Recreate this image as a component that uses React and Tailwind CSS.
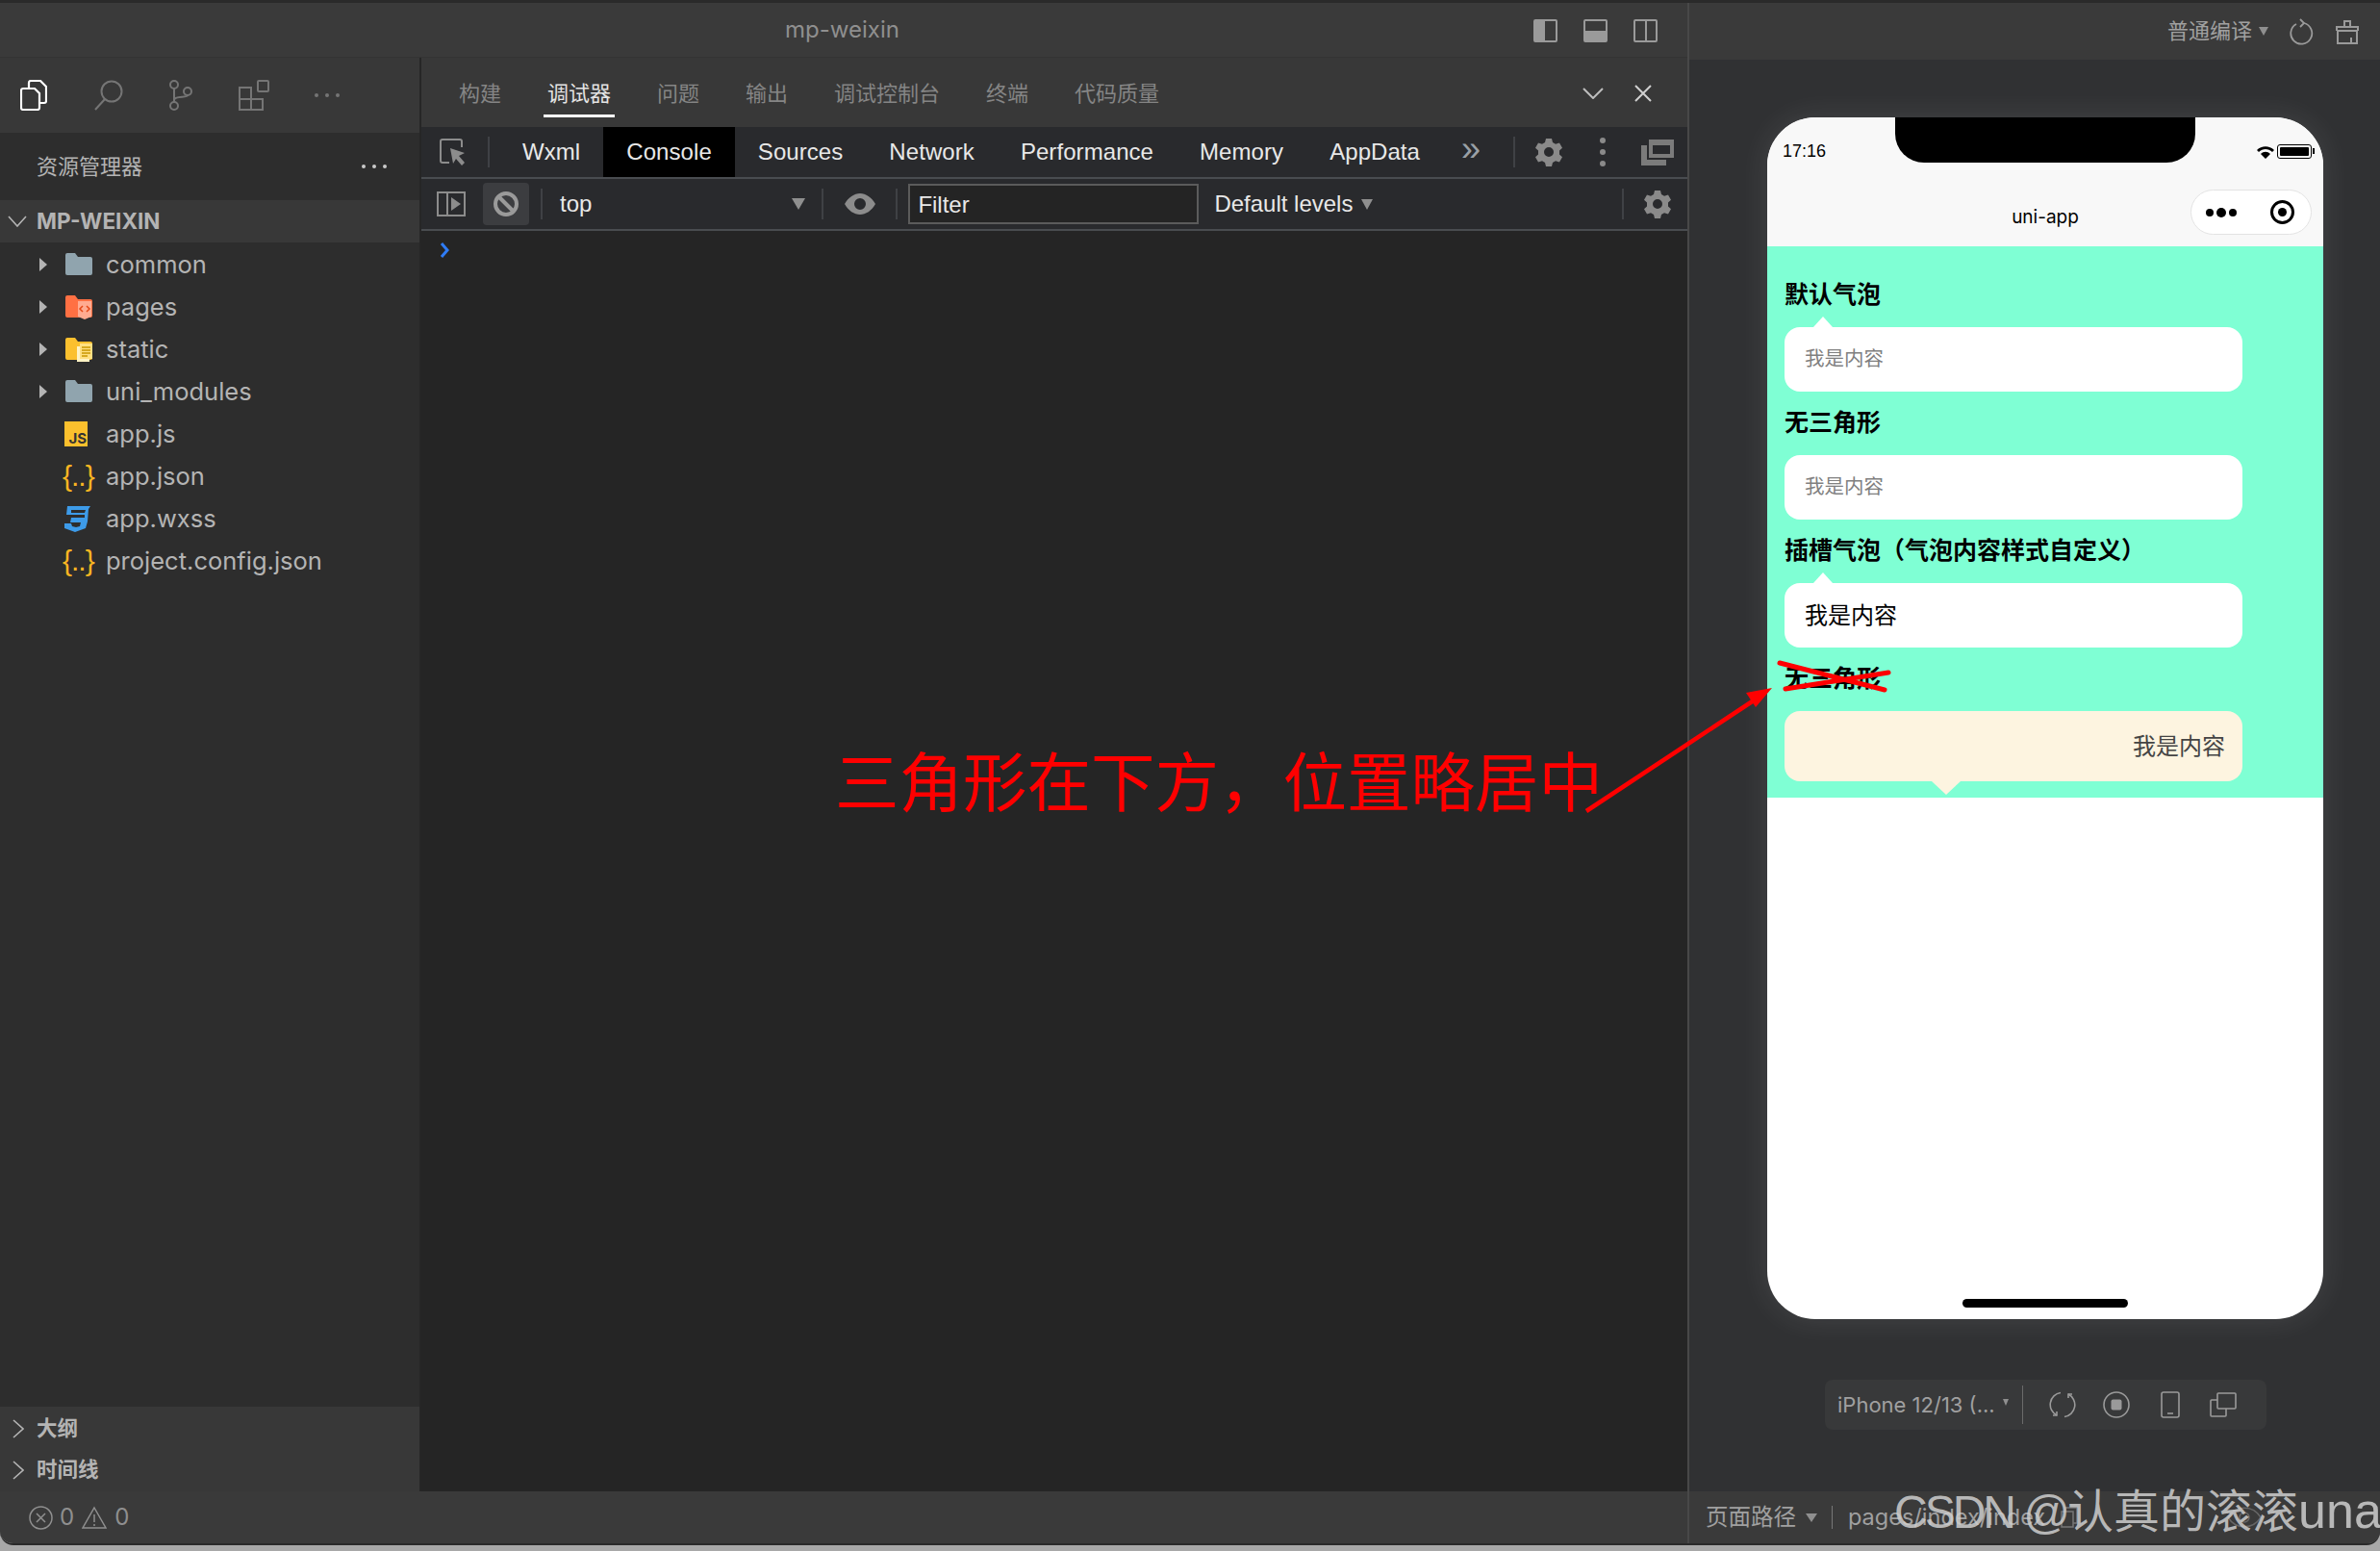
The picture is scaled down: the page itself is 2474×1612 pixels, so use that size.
import React from "react";

const files = [
  { name: "common", type: "folder" },
  { name: "pages", type: "pages" },
  { name: "static", type: "static" },
  { name: "uni_modules", type: "folder" },
  { name: "app.js", type: "js" },
  { name: "app.json", type: "json" },
  { name: "app.wxss", type: "css" },
  { name: "project.config.json", type: "json" },
];

const topTabs = ["构建", "调试器", "问题", "输出", "调试控制台", "终端", "代码质量"];
const devTabs = ["Wxml", "Console", "Sources", "Network", "Performance", "Memory", "AppData"];

const Gear = () => (
  <svg width="28" height="30" viewBox="0 0 28 30" fill="#8a8a8a">
    <path
      fillRule="evenodd"
      d="M11 1h6l1 4 3 1.7 4-1.200 3 5.200-3 2.900v3.800l3 2.900-3 5.200-4-1.200-3 1.700-1 4h-6l-1-4-3-1.700-4 1.200-3-5.200 3-2.900v-3.800l-3-2.900 3-5.200 4 1.200 3-1.700zM14 10a5 5 0 1 0 0 10 5 5 0 0 0 0-10z"
    />
  </svg>
);

const Caret = ({ className = "border-x-[6px] border-t-[11px]" }) => (
  <span className={`w-0 h-0 border-x-transparent border-t-[#8f8f8f] ${className}`} />
);

const FileIcon = ({ type }) => {
  if (type === "js") {
    return (
      <span className="w-[24px] h-[26px] bg-[#fbc02d] flex items-end justify-end pr-[1px] text-[15px] leading-[17px] font-bold text-[#333]">
        JS
      </span>
    );
  }
  if (type === "json") {
    return <span className="-ml-[2px] text-[#f9b522] text-[30px] leading-[30px] font-['Liberation_Sans',sans-serif] tracking-[-1px]">{"{..}"}</span>;
  }
  if (type === "css") {
    return (
      <svg width="28" height="28" viewBox="0 0 28 28">
        <path d="M3 1h24l-2 3-1 13-2 7-11 4-11-4 0-5h7l1 3 4 1 4-1 1-4H6l1-5h14l0-3H2l1-9z" fill="#3d9be9" />
        <path d="M7 5h15l-1 3H7z" fill="#2d2d2d" />
      </svg>
    );
  }
  const color = type === "pages" ? "#ff7043" : type === "static" ? "#fcc02e" : "#90a4ae";
  return (
    <svg width="30" height="28" viewBox="0 0 30 28">
      <path d="M1 4a2 2 0 0 1 2-2h8l3 4h13a2 2 0 0 1 2 2v15a2 2 0 0 1-2 2H3a2 2 0 0 1-2-2z" fill={color} />
      {type === "pages" && (
        <g>
          <path d="M14 8h14v16l-7 3-7-3z" fill="#ffab91" />
          <path d="M19 13l-3 3 3 3M23 13l3 3-3 3" stroke="#e64a19" strokeWidth="1.500" fill="none" />
        </g>
      )}
      {type === "static" && (
        <g>
          <rect x="13" y="11" width="13" height="16" fill="#fff3c4" />
          <rect x="16" y="8" width="13" height="16" fill="#ffe082" />
          <path d="M18 12h9M18 15h9M18 18h9M18 21h6" stroke="#c99700" strokeWidth="1.300" />
        </g>
      )}
    </svg>
  );
};

const Sidebar = () => (
  <aside className="w-[438px] shrink-0 flex flex-col border-r-2 border-[#262626]">
    {/* activity bar */}
    <div className="h-[78px] shrink-0 bg-[#383838] flex items-center pl-[21px]">
      <svg width="28" height="32" viewBox="0 0 28 32" fill="none" stroke="#fff" strokeWidth="2.200">
        <path d="M9 8V3a2 2 0 0 1 2-2h10l6 6v15a2 2 0 0 1-2 2h-5" />
        <path d="M1 11a2 2 0 0 1 2-2h12l5 5v15a2 2 0 0 1-2 2H3a2 2 0 0 1-2-2z" />
      </svg>
      <svg className="ml-[49px]" width="30" height="32" viewBox="0 0 30 32" fill="none" stroke="#757575" strokeWidth="2">
        <circle cx="18" cy="12" r="10.500" />
        <path d="M11 20L1 31" />
      </svg>
      <svg className="ml-[47px]" width="26" height="32" viewBox="0 0 26 32" fill="none" stroke="#757575" strokeWidth="2">
        <circle cx="6" cy="5" r="4" />
        <circle cx="6" cy="27" r="4" />
        <circle cx="20" cy="12" r="4" />
        <path d="M6 9v14M6 21c0-5 14-2 14-5" />
      </svg>
      <svg className="ml-[47px]" width="32" height="32" viewBox="0 0 32 32" fill="none" stroke="#757575" strokeWidth="2">
        <rect x="1" y="8" width="12" height="12" />
        <rect x="1" y="20" width="12" height="11" />
        <rect x="13" y="20" width="12" height="11" />
        <rect x="20" y="1" width="11" height="11" rx="1" />
      </svg>
      <div className="ml-[47px] flex gap-[7px]">
        <span className="w-[4px] h-[4px] rounded-full bg-[#757575]" />
        <span className="w-[4px] h-[4px] rounded-full bg-[#757575]" />
        <span className="w-[4px] h-[4px] rounded-full bg-[#757575]" />
      </div>
    </div>

    <div className="flex-1 bg-[#2d2d2d] flex flex-col">
      <div className="h-[70px] flex items-center justify-between pl-[38px] pr-[34px] text-[22px] text-[#b4b4b4]">
        <span>资源管理器</span>
        <div className="flex gap-[7px]">
          <span className="w-[4px] h-[4px] rounded-full bg-[#c8c8c8]" />
          <span className="w-[4px] h-[4px] rounded-full bg-[#c8c8c8]" />
          <span className="w-[4px] h-[4px] rounded-full bg-[#c8c8c8]" />
        </div>
      </div>
      <div className="h-[44px] bg-[#383838] flex items-center text-[22.500px] font-bold text-[#b4b4b4] pl-[8px]">
        <svg width="20" height="12" viewBox="0 0 20 12" fill="none" stroke="#b4b4b4" strokeWidth="1.600">
          <path d="M1 1l9 10 9-10" />
        </svg>
        <span className="ml-[10px]">MP-WEIXIN</span>
      </div>
      <ul className="pt-[1px]">
        {files.map((f) => (
          <li key={f.name} className="h-[44px] flex items-center text-[25.500px] text-[#b4b4b4]">
            <span className="w-[41px] pl-[41px] shrink-0">
              {["folder", "pages", "static"].includes(f.type) && (
                <span className="block w-0 h-0 border-y-[7px] border-y-transparent border-l-[8px] border-l-[#b4b4b4]" />
              )}
            </span>
            <span className="w-[69px] pl-[26px] flex items-center shrink-0">
              <FileIcon type={f.type} />
            </span>
            <span>{f.name}</span>
          </li>
        ))}
      </ul>

      <div className="mt-auto h-[88px] bg-[#383838] pt-[1px] text-[21.500px] font-bold text-[#b4b4b4]">
        {["大纲", "时间线"].map((label) => (
          <div key={label} className="h-[43px] flex items-center pl-[13px]">
            <svg width="12" height="20" viewBox="0 0 12 20" fill="none" stroke="#b4b4b4" strokeWidth="1.600">
              <path d="M1 1l10 9-10 9" />
            </svg>
            <span className="ml-[13px]">{label}</span>
          </div>
        ))}
      </div>
    </div>
  </aside>
);

const DevTools = () => (
  <main className="flex-1 flex flex-col min-w-0">
    {/* tabs of the lower panel */}
    <div className="h-[72px] shrink-0 bg-[#383838] flex items-center pl-[39px] pt-[2px] text-[22px] text-[#858585]">
      <div className="flex gap-[48px]">
        {topTabs.map((t) => (
          <span key={t} className={t === "调试器" ? "relative text-[#e4e4e4]" : ""}>
            {t}
            {t === "调试器" && <span className="absolute -left-[4px] -right-[4px] -bottom-[8px] h-[3px] bg-white" />}
          </span>
        ))}
      </div>
      <svg className="ml-auto" width="22" height="12" viewBox="0 0 22 12" fill="none" stroke="#bdbdbd" strokeWidth="2">
        <path d="M1 1l10 10 10-10" />
      </svg>
      <svg className="ml-[32px] mr-[37px]" width="18" height="18" viewBox="0 0 18 18" fill="none" stroke="#d0d0d0" strokeWidth="2">
        <path d="M1 1l16 16M17 1L1 17" />
      </svg>
    </div>

    <div className="flex-1 flex flex-col font-['Liberation_Sans','Noto_Sans_CJK_SC',sans-serif]">
      {/* devtools panel tabs */}
      <div className="h-[54px] shrink-0 bg-[#292a2d] border-b-2 border-[#494c50] flex items-stretch text-[24px] tracking-[0.07px] text-[#e8e8e8]">
        <div className="w-[66px] flex items-center justify-center">
          <svg width="28" height="30" viewBox="0 0 28 30" fill="none">
            <path d="M10 26H3a2 2 0 0 1-2-2V4a2 2 0 0 1 2-2h18a2 2 0 0 1 2 2v6" stroke="#8c8c8c" strokeWidth="2" />
            <path d="M11 11l15 5-6 3 6 7-3 3-6-7-3 5z" fill="#8c8c8c" />
          </svg>
        </div>
        <span className="ml-[3px] w-[2px] h-[32px] self-center bg-[#3f4145]" />
        <div className="ml-[10px] flex items-stretch">
          {devTabs.map((t) => (
            <span key={t} className={`px-6 flex items-center ${t === "Console" ? "bg-black" : ""}`}>
              {t}
            </span>
          ))}
        </div>
        <span className="w-[58px] flex items-center justify-center text-[36px] text-[#9aa0a6] pb-[6px]">»</span>
        <span className="ml-[15px] w-[2px] h-[32px] self-center bg-[#3f4145]" />
        <span className="ml-[21px] flex items-center"><Gear /></span>
        <div className="ml-[39px] flex flex-col justify-center gap-[6px]">
          <span className="w-[6px] h-[6px] rounded-full bg-[#8a8a8a]" />
          <span className="w-[6px] h-[6px] rounded-full bg-[#8a8a8a]" />
          <span className="w-[6px] h-[6px] rounded-full bg-[#8a8a8a]" />
        </div>
        <svg className="ml-[36px] self-center" width="36" height="30" viewBox="0 0 36 30">
          <path d="M1 8h6v15h20v6H1z" fill="#7b7b7b" />
          <rect x="9" y="2" width="26" height="19" fill="#7b7b7b" />
          <rect x="13" y="8" width="18" height="9" fill="#292a2d" />
        </svg>
      </div>

      {/* console toolbar */}
      <div className="h-[54px] shrink-0 bg-[#292a2d] border-b-2 border-[#494c50] flex items-center text-[24px] text-[#e8e8e8]">
        <svg className="ml-[16px]" width="30" height="26" viewBox="0 0 30 26" fill="none">
          <rect x="1" y="1" width="28" height="24" stroke="#8c8c8c" strokeWidth="2" />
          <path d="M11 1v24" stroke="#8c8c8c" strokeWidth="2" />
          <path d="M15 6l10 7-10 7z" fill="#8c8c8c" />
        </svg>
        <div className="ml-[18px] w-[48px] h-[44px] rounded-[4px] bg-[#3c3d40] flex items-center justify-center">
          <svg width="28" height="28" viewBox="0 0 28 28" fill="none" stroke="#9a9a9a" strokeWidth="4">
            <circle cx="14" cy="14" r="11" />
            <path d="M6 6l16 16" />
          </svg>
        </div>
        <span className="ml-[12px] w-[2px] h-[32px] bg-[#3f4145]" />
        <span className="ml-[18px]">top</span>
        <span className="ml-[208px]"><Caret className="block border-x-[7px] border-t-[12px]" /></span>
        <span className="ml-[17px] w-[2px] h-[32px] bg-[#3f4145]" />
        <svg className="ml-[22px]" width="32" height="22" viewBox="0 0 32 22">
          <path fillRule="evenodd" d="M0 11C4 4 10 0 16 0s12 4 16 11c-4 7-10 11-16 11S4 18 0 11zm16-6a6 6 0 1 0 0 12 6 6 0 0 0 0-12z" fill="#8c8c8c" />
        </svg>
        <span className="ml-[21px] w-[2px] h-[32px] bg-[#3f4145]" />
        <div className="ml-[11px] w-[302px] h-[42px] bg-[#242424] border-2 border-[#5b5b5b] flex items-center pl-[8px] pt-[2px]">Filter</div>
        <span className="ml-[16px]">Default levels</span>
        <span className="ml-[9px]"><Caret className="block border-x-[6px] border-t-[11px]" /></span>
        <span className="ml-[259px] w-[2px] h-[32px] bg-[#3f4145]" />
        <span className="ml-[21px] flex items-center"><Gear /></span>
      </div>

      <div className="flex-1 bg-[#252525] pl-[19px] pt-[12px]">
        <svg width="10" height="16" viewBox="0 0 10 16" fill="none" stroke="#2f7cf6" strokeWidth="3">
          <path d="M2 1l6 7-6 7" />
        </svg>
      </div>
    </div>
  </main>
);

const Bubble = ({ className, arrow, children }) => (
  <div className={`relative w-[476px] rounded-[16px] flex items-center ${className}`}>
    {arrow === "top" && (
      <span className="absolute -top-[11px] left-[30px] w-0 h-0 border-x-[10px] border-x-transparent border-b-[11px] border-b-white" />
    )}
    {arrow === "bottom" && (
      <span className="absolute -bottom-[14px] left-[153px] w-0 h-0 border-x-[15px] border-x-transparent border-t-[14px] border-t-[#fdf4e0]" />
    )}
    {children}
  </div>
);

const Title = ({ children }) => (
  <div className="h-[66px] flex items-center text-[25px] font-bold text-black">{children}</div>
);

const Phone = () => (
  <div className="ml-[81px] w-[578px] h-[1249px] shrink-0 rounded-[50px] bg-white overflow-hidden relative shadow-[0_0_32px_rgba(255,255,255,0.1)] flex flex-col">
    <div className="h-[134px] shrink-0 bg-[#f8f8f8] relative">
      <div className="absolute left-[133px] top-0 w-[312px] h-[47px] bg-black rounded-b-[30px]" />
      <div className="h-[70px] flex items-center justify-between pl-[16px] pr-[12px] pt-[1px] text-[18px] text-black font-['Liberation_Sans',sans-serif]">
        <span>17:16</span>
        <div className="flex items-center gap-[3px]">
          <svg width="18" height="14" viewBox="0 0 18 14" fill="#000">
            <path d="M0 5c5-5 13-5 18 0l-2 2c-4-4-10-4-14 0zM4 9c3-3 7-3 10 0l-5 5z" />
          </svg>
          <div className="w-[36px] h-[15px] border border-black rounded-[3px] p-[2px] relative">
            <div className="w-full h-full bg-black rounded-[1px]" />
            <span className="absolute -right-[4px] top-[3px] w-[2px] h-[6px] bg-black" />
          </div>
        </div>
      </div>
      <div className="relative h-[64px] flex items-center justify-center text-[19px] text-black pt-[5px]">
        uni-app
        <div className="absolute right-[12px] top-[5px] w-[126px] h-[47px] rounded-full bg-white border border-[#e3e3e3] flex items-center justify-between pl-[15px] pr-[17px]">
          <div className="flex items-center gap-[3px]">
            <span className="w-[8px] h-[8px] rounded-full bg-black" />
            <span className="w-[10px] h-[10px] rounded-full bg-black" />
            <span className="w-[8px] h-[8px] rounded-full bg-black" />
          </div>
          <span className="w-[25px] h-[25px] rounded-full border-[3px] border-black flex items-center justify-center">
            <span className="w-[9px] h-[9px] rounded-full bg-black" />
          </span>
        </div>
      </div>
    </div>

    {/* bubble demo */}
    <div className="bg-[#7fffd4] pl-[18px] pt-[18px] pb-[17px]">
      <Title>默认气泡</Title>
      <Bubble className="h-[67px] bg-white pl-[21px] text-[20.500px] text-[#808080]" arrow="top">我是内容</Bubble>
      <Title>无三角形</Title>
      <Bubble className="h-[67px] bg-white pl-[21px] text-[20.500px] text-[#808080]">我是内容</Bubble>
      <Title>插槽气泡（气泡内容样式自定义）</Title>
      <Bubble className="h-[67px] bg-white pl-[21px] text-[24px] text-black" arrow="top">我是内容</Bubble>
      <Title>无三角形</Title>
      <Bubble className="h-[73px] bg-[#fdf4e0] justify-end pr-[18px] text-[24px] text-[#444]" arrow="bottom">我是内容</Bubble>
    </div>

    <div className="absolute left-[203px] bottom-[12px] w-[172px] h-[9px] rounded-full bg-black" />
  </div>
);

const Simulator = () => (
  <section className="flex-1 flex flex-col bg-[#303133]">
    <div className="h-[59px] shrink-0 bg-[#3a3a3a] flex items-center justify-end pr-[21px] text-[22px] text-[#a0a0a0]">
      <span>普通编译</span>
      <span className="ml-[7px]"><Caret className="block border-x-[5px] border-t-[9px]" /></span>
      <svg className="ml-[21px]" width="26" height="28" viewBox="0 0 26 28" fill="none" stroke="#9a9a9a" strokeWidth="1.800">
        <path d="M8 6a11 11 0 1 0 8-1" />
        <path d="M12 1l4 4-4 4" />
      </svg>
      <svg className="ml-[22px]" width="26" height="26" viewBox="0 0 26 26" fill="none" stroke="#9a9a9a" strokeWidth="2">
        <path d="M10 8V2h6v6M2 12V8h22v4M3 12h20v13H3zM17 25v-6" />
      </svg>
    </div>
    <div className="h-[60px] shrink-0" />
    <Phone />
    <div className="ml-[141px] mt-[63px] w-[459px] h-[52px] shrink-0 rounded-[8px] bg-[#38393a] flex items-center pl-[13px] text-[22px] text-[#a0a0a0]">
      <span>iPhone 12/13 (...</span>
      <span className="ml-[8px] mb-[6px]"><Caret className="block border-x-[3px] border-t-[7px]" /></span>
      <span className="ml-[14px] w-[1px] h-[40px] bg-[#6a6a6a]" />
      <svg className="ml-[27px]" width="28" height="28" viewBox="0 0 28 28" fill="none" stroke="#9a9a9a" strokeWidth="1.600">
        <path d="M12 1.500A12.500 12.500 0 0 0 8 25M16 26.500A12.500 12.500 0 0 0 20 3" />
        <path d="M8 21v4H4M20 7V3h4" />
      </svg>
      <svg className="ml-[28px]" width="28" height="28" viewBox="0 0 28 28">
        <circle cx="14" cy="14" r="13" fill="none" stroke="#9a9a9a" strokeWidth="1.600" />
        <rect x="8.500" y="8.500" width="11" height="11" rx="2" fill="#9a9a9a" />
      </svg>
      <svg className="ml-[32px]" width="20" height="28" viewBox="0 0 20 28" fill="none" stroke="#9a9a9a" strokeWidth="1.600">
        <rect x="1" y="1" width="18" height="26" rx="2" />
        <path d="M7 23h6" />
      </svg>
      <svg className="ml-[31px]" width="28" height="28" viewBox="0 0 28 28" fill="none" stroke="#9a9a9a" strokeWidth="1.600">
        <rect x="8" y="2" width="19" height="16" rx="1" />
        <path d="M8 9H2a1 1 0 0 0-1 1v15a1 1 0 0 0 1 1h14a1 1 0 0 0 1-1v-7" />
      </svg>
    </div>
    <div className="mt-auto h-[54px] shrink-0 bg-[#3a3a3a] flex items-center pl-[17px] text-[23.500px] text-[#a0a0a0]">
      <span>页面路径</span>
      <span className="ml-[10px]"><Caret className="block border-x-[6px] border-t-[9px]" /></span>
      <span className="ml-[15px] w-[1px] h-[24px] bg-[#777]" />
      <span className="ml-[16px]">pages/index/index</span>
      <svg className="ml-[16px]" width="18" height="22" viewBox="0 0 18 22" fill="none" stroke="#777" strokeWidth="1.500">
        <rect x="1" y="5" width="12" height="16" />
        <path d="M5 5V1h12v16h-4" />
      </svg>
      <svg className="ml-[155px]" width="36" height="22" viewBox="0 0 36 22" fill="none" stroke="#666" strokeWidth="1.500">
        <path d="M1 11c8-13 26-13 34 0-8 13-26 13-34 0z" />
        <circle cx="18" cy="11" r="5" />
      </svg>
    </div>
  </section>
);

export default function App() {
  return (
    <div className="relative w-[2474px] h-[1612px] overflow-hidden bg-[#a8a8a8] font-['Inter','Noto_Sans_CJK_SC',sans-serif]">
      <div className="h-[1606px] flex rounded-b-[14px] overflow-hidden border-t-[3px] border-b-2 border-[#2a2a2a]">
        <div className="w-[1756px] shrink-0 flex flex-col border-r-2 border-[#484848]">
          {/* title bar */}
          <div className="h-[57px] shrink-0 bg-[#3a3a3a] border-b border-[#333] relative flex items-center justify-center text-[24px] text-[#8f8f8f]">
            <span className="mr-[3px]">mp-weixin</span>
            <div className="absolute left-[1594px] top-[17px] flex gap-[27px]">
              <div className="w-[25px] h-[24px] border-2 border-[#9a9a9a] rounded-[2px] flex">
                <span className="w-[10px] bg-[#9a9a9a]" />
              </div>
              <div className="w-[25px] h-[24px] border-2 border-[#9a9a9a] rounded-[2px] flex flex-col justify-end">
                <span className="h-[10px] bg-[#9a9a9a]" />
              </div>
              <div className="w-[25px] h-[24px] border-2 border-[#9a9a9a] rounded-[2px] flex justify-center">
                <span className="w-[2px] bg-[#9a9a9a]" />
              </div>
            </div>
          </div>
          <div className="flex-1 flex min-h-0">
            <Sidebar />
            <DevTools />
          </div>
          {/* status bar */}
          <div className="h-[54px] shrink-0 bg-[#3a3a3a] flex items-center pl-[30px] text-[24px] text-[#8f8f8f]">
            <svg width="25" height="25" viewBox="0 0 25 25" fill="none" stroke="#8f8f8f" strokeWidth="1.500">
              <circle cx="12.500" cy="12.500" r="11.500" />
              <path d="M8 8l9 9M17 8l-9 9" />
            </svg>
            <span className="ml-[7px]">0</span>
            <svg className="ml-[8px]" width="26" height="24" viewBox="0 0 26 24" fill="none" stroke="#8f8f8f" strokeWidth="1.500">
              <path d="M13 2l12 21H1z" />
              <path d="M13 9v8M13 19v2" />
            </svg>
            <span className="ml-[8px]">0</span>
          </div>
        </div>
        <Simulator />
      </div>

      {/* hand-drawn annotation on the screenshot */}
      <span className="absolute left-[868px] top-[770px] text-[66.500px] leading-[88px] text-[#ff0000] whitespace-nowrap">
        三角形在下方，位置略居中
      </span>
      <svg className="absolute inset-0 pointer-events-none" width="2474" height="1612" viewBox="0 0 2474 1612">
        <path d="M1649 843L1832 722" stroke="#ff0000" strokeWidth="4.500" />
        <path d="M1842 715l-27 5 10 15z" fill="#ff0000" />
        <path d="M1850 689L1959 717M1963 699L1856 716" stroke="#ff0000" strokeWidth="5" strokeLinecap="round" />
      </svg>

      {/* watermark */}
      <span className="absolute left-[1969px] top-[1536px] text-[48px] leading-[68px] text-[#cfcfcf]/85 whitespace-nowrap font-['Liberation_Sans','Noto_Sans_CJK_SC',sans-serif]">
        <span className="tracking-[-3px]">CSDN @</span>认真的滚滚<span className="text-[52px]">una</span>
      </span>
    </div>
  );
}
